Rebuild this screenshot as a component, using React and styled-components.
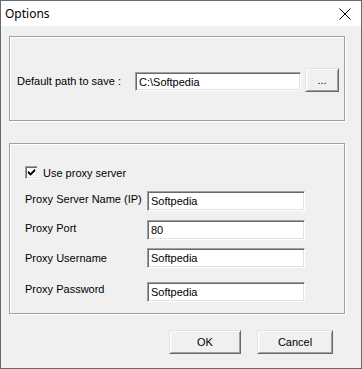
import styled, { createGlobalStyle } from 'styled-components';

const GlobalStyle = createGlobalStyle`
    * {
        margin: 0;
        padding: 0;
        box-sizing: border-box;
    }

    body {
        background: #ffffff;
        font-family: "Liberation Sans", Arial, sans-serif;
        font-size: 11px;
        color: #000;
    }
`;

const Window = styled.div`
    width: 362px;
    height: 369px;
    border: 1px solid #6a6a6a;
    background-color: #f0f0f0;
    display: flex;
    flex-direction: column;
    overflow: hidden;
`;

const TitleBar = styled.div`
    height: 25px;
    flex-shrink: 0;
    background-color: #ffffff;
    display: flex;
    align-items: center;
    justify-content: space-between;
    padding: 0 8px 0 4px;
    font-family: "Noto Sans", "Liberation Sans", sans-serif;
    font-size: 12px;
`;

const CloseIcon = styled.svg`
    width: 12px;
    height: 12px;
    margin-right: 2px;
`;

const Body = styled.div`
    flex: 1;
    padding: 10px 0 0 8px;
    display: flex;
    flex-direction: column;
`;

const Group = styled.div`
    width: 336px;
    height: ${(p) => p.$height}px;
    border: 1px solid #a0a0a0;
    box-shadow: inset 1px 1px 0 #ffffff, 1px 1px 0 #ffffff;
    margin-top: ${(p) => p.$top || 0}px;
    padding: ${(p) => p.$pad};
    display: flex;
    flex-direction: column;
`;

const Row = styled.div`
    display: flex;
    align-items: flex-start;
    margin-top: ${(p) => p.$top || 0}px;
`;

const Label = styled.span`
    display: block;
    width: ${(p) => p.$width}px;
    line-height: ${(p) => p.$lh || 20}px;
    margin-top: ${(p) => p.$shift || 0}px;
    white-space: nowrap;
`;

const TextBox = styled.input`
    width: ${(p) => p.$width}px;
    height: ${(p) => p.$height || 20}px;
    margin-top: ${(p) => p.$top || 0}px;
    background: #ffffff;
    border: 1px solid;
    border-color: #a0a0a0 #ffffff #ffffff #a0a0a0;
    box-shadow: inset 1px 1px 0 #696969, inset -1px -1px 0 #e3e3e3;
    padding: 0 0 0 3px;
    font-family: "Liberation Sans", Arial, sans-serif;
    font-size: 11px;
    color: #000;
    outline: none;
`;

const Button = styled.button`
    width: ${(p) => p.$width}px;
    height: 24px;
    margin-left: ${(p) => p.$left || 0}px;
    background-color: #f0f0f0;
    border: 1px solid;
    border-color: #e3e3e3 #696969 #696969 #e3e3e3;
    box-shadow: inset 1px 1px 0 #ffffff, inset -1px -1px 0 #a0a0a0;
    font-family: "Liberation Sans", Arial, sans-serif;
    font-size: 11px;
    color: #000;
    display: flex;
    align-items: center;
    justify-content: center;
    padding-bottom: 1px;
`;

const CheckRow = styled.label`
    display: flex;
    align-items: center;
    height: 13px;
    gap: 5px;
`;

const CheckBox = styled.span`
    width: 13px;
    height: 13px;
    background: #ffffff;
    border: 1px solid;
    border-color: #a0a0a0 #ffffff #ffffff #a0a0a0;
    box-shadow: inset 1px 1px 0 #696969, inset -1px -1px 0 #e3e3e3;
    display: flex;
    align-items: center;
    justify-content: center;
`;

const Footer = styled.div`
    display: flex;
    padding-left: 160px;
    margin-top: 16px;
`;

const proxyRows = [
    { label: 'Proxy Server Name (IP)', value: 'Softpedia', top: 12, shift: -2 },
    { label: 'Proxy Port', value: '80', top: 9, shift: -2 },
    { label: 'Proxy Username', value: 'Softpedia', top: 8, shift: 0 },
    { label: 'Proxy Password', value: 'Softpedia', top: 14, shift: -3 },
];

function App() {
    return (
        <>
            <GlobalStyle />
            <Window>
                <TitleBar>
                    <span>Options</span>
                    <CloseIcon viewBox="0 0 12 12">
                        <path d="M0.5 0.5 L11.5 11.5 M11.5 0.5 L0.5 11.5" stroke="#000" strokeWidth="1" fill="none" />
                    </CloseIcon>
                </TitleBar>
                <Body>
                    <Group $height={85} $pad="31px 0 0 7px">
                        <Row>
                            <Label $width={118} $lh={19} $shift={4}>Default path to save :</Label>
                            <TextBox $width={166} $height={19} $top={4} defaultValue="C:\Softpedia" />
                            <Button $width={34} $left={4}>...</Button>
                        </Row>
                    </Group>
                    <Group $height={171} $top={22} $pad="22px 0 0 15px">
                        <CheckRow>
                            <CheckBox>
                                <svg width="9" height="9" viewBox="0 0 9 9">
                                    <path d="M1 3.5 L3.5 6 L8 1.5 M1 4.5 L3.5 7 L8 2.5" stroke="#000" strokeWidth="1.2" fill="none" />
                                </svg>
                            </CheckBox>
                            <span>Use proxy server</span>
                        </CheckRow>
                        {proxyRows.map((r) => (
                            <Row key={r.label} $top={r.top}>
                                <Label $width={122} $shift={r.shift}>{r.label}</Label>
                                <TextBox $width={158} defaultValue={r.value} />
                            </Row>
                        ))}
                    </Group>
                    <Footer>
                        <Button $width={72}>OK</Button>
                        <Button $width={76} $left={16}>Cancel</Button>
                    </Footer>
                </Body>
            </Window>
        </>
    );
}

export default App;
